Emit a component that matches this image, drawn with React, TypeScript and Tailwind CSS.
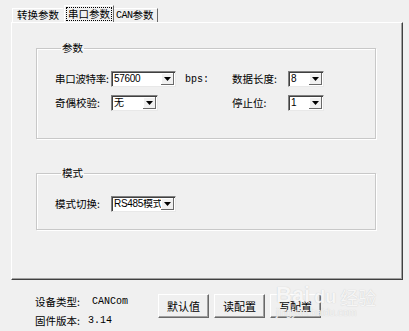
import React from "react";

type comboProps = {
  value: string;
  width: string;
};

function Combo({ value, width }: comboProps) {
  return (
    <div
      className={`${width} h-[16px] flex items-center bg-white border border-t-[#808080] border-l-[#808080] border-r-[#e8e8e8] border-b-[#e8e8e8] shadow-[inset_1px_1px_0_#404040]`}
    >
      <span className="flex-1 pl-[2px] text-[10px] leading-none text-black whitespace-nowrap overflow-hidden font-['Liberation_Sans','Noto_Sans_CJK_SC',sans-serif] tracking-[-0.3px]">
        {value}
      </span>
      <div className="w-[13px] h-[12px] mr-[1px] shrink-0 bg-[#f0f0f0] flex items-center justify-center shadow-[inset_-1px_-1px_0_#696969,inset_1px_1px_0_#ffffff]">
        <svg width="7" height="4" viewBox="0 0 7 4">
          <path d="M0 0h7L3.5 4z" fill="#000" />
        </svg>
      </div>
    </div>
  );
}

function Btn({ label }: { label: string }) {
  return (
    <div className="w-[51px] h-[24px] flex items-center justify-center text-[11px] text-black bg-[#f0f0f0] border border-t-[#ffffff] border-l-[#ffffff] border-r-[#696969] border-b-[#696969] shadow-[inset_-1px_-1px_0_#a0a0a0]">
      {label}
    </div>
  );
}

export default function App() {
  return (
    <div className="relative w-[409px] h-[331px] bg-[#f0f0f0] overflow-hidden font-['Noto_Sans_CJK_SC',sans-serif] text-[10.5px] text-black">
      {/* tabs */}
      <div className="flex items-end h-[22px] pl-[12px]">
        <div className="h-[14px] px-[4px] flex items-center border-t border-l border-[#ffffff] leading-none">
          转换参数
        </div>
        <div className="h-[17px] px-[2px] flex items-center bg-[#f0f0f0] border-t border-l border-[#ffffff] border-r border-r-[#696969] leading-none ml-[1px]">
          <span className="px-[1px] py-[1px] outline outline-1 outline-dotted outline-[#000]">串口参数</span>
        </div>
        <div className="h-[14px] pl-[2px] pr-[3px] flex items-center border-t border-[#ffffff] border-r border-r-[#696969] leading-none">
          <span className="font-['Liberation_Mono',monospace] text-[10px] tracking-[-0.5px]">CAN</span>参数
        </div>
      </div>

      {/* panel */}
      <div className="ml-[11px] w-[392px] h-[258px] border-t border-l border-[#ffffff] border-r border-b border-r-[#404040] border-b-[#404040] shadow-[inset_-1px_-1px_0_#a0a0a0] pt-[18px] pl-[24px]">
        <fieldset className="w-[340px] h-[98px] border border-[#c8c8c8] shadow-[1px_1px_0_#ffffff,inset_1px_1px_0_#ffffff] pl-[18px] pt-[16px]">
          <legend className="ml-[6px] px-[1px] leading-[14px]">参数</legend>
          <div className="flex items-center">
            <div className="w-[177px] flex items-center">
              <span className="w-[56px] whitespace-nowrap tracking-[-0.3px]">串口波特率:</span>
              <Combo value="57600" width="w-[65px]" />
              <span className="ml-[9px] font-['Liberation_Mono',monospace] text-[10px]">bps:</span>
            </div>
            <span className="w-[56px] whitespace-nowrap">数据长度:</span>
            <Combo value="8" width="w-[36px]" />
          </div>
          <div className="flex items-center mt-[8px]">
            <div className="w-[177px] flex items-center">
              <span className="w-[56px] whitespace-nowrap">奇偶校验:</span>
              <Combo value="无" width="w-[47px]" />
            </div>
            <span className="w-[56px] whitespace-nowrap">停止位:</span>
            <Combo value="1" width="w-[36px]" />
          </div>
        </fieldset>

        <fieldset className="mt-[27px] w-[340px] h-[64px] border border-[#c8c8c8] shadow-[1px_1px_0_#ffffff,inset_1px_1px_0_#ffffff] pl-[18px] pt-[16px]">
          <legend className="ml-[6px] px-[1px] leading-[14px]">模式</legend>
          <div className="flex items-center">
            <span className="w-[56px] whitespace-nowrap">模式切换:</span>
            <Combo value="RS485模式" width="w-[65px]" />
          </div>
        </fieldset>
      </div>

      {/* bottom info + buttons */}
      <div className="flex items-start pt-[14px] pl-[35px]">
        <div className="flex flex-col gap-[6px] w-[123px] pt-[1px]">
          <div className="flex items-center h-[13px]">
            <span className="w-[57px] whitespace-nowrap">设备类型:</span>
            <span className="font-['Liberation_Mono',monospace] text-[10px]">CANCom</span>
          </div>
          <div className="flex items-center h-[13px]">
            <span className="w-[53px] whitespace-nowrap">固件版本:</span>
            <span className="font-['Liberation_Mono',monospace] text-[10px]">3.14</span>
          </div>
        </div>
        <div className="flex gap-[5px]">
          <Btn label="默认值" />
          <Btn label="读配置" />
          <Btn label="写配置" />
        </div>
      </div>

      {/* watermark */}
      <div className="absolute left-[276px] top-[284px] pointer-events-none select-none flex flex-col items-start">
        <div className="flex items-end gap-[4px] font-['Liberation_Sans',sans-serif] font-bold text-[22px] leading-none text-[#f6f6f6] [text-shadow:0_0_1px_#c4c4c4]">
          <span>Bai</span>
          <span className="text-[18px]">du</span>
          <span className="text-[18px] font-['Noto_Sans_CJK_SC',sans-serif] font-normal">经验</span>
        </div>
        <span className="mt-[2px] text-[10px] leading-none font-['Liberation_Sans',sans-serif] text-[#f4f4f4] [text-shadow:0_0_1px_#c8c8c8]">
          jingyan.baidu.com
        </span>
      </div>
    </div>
  );
}
